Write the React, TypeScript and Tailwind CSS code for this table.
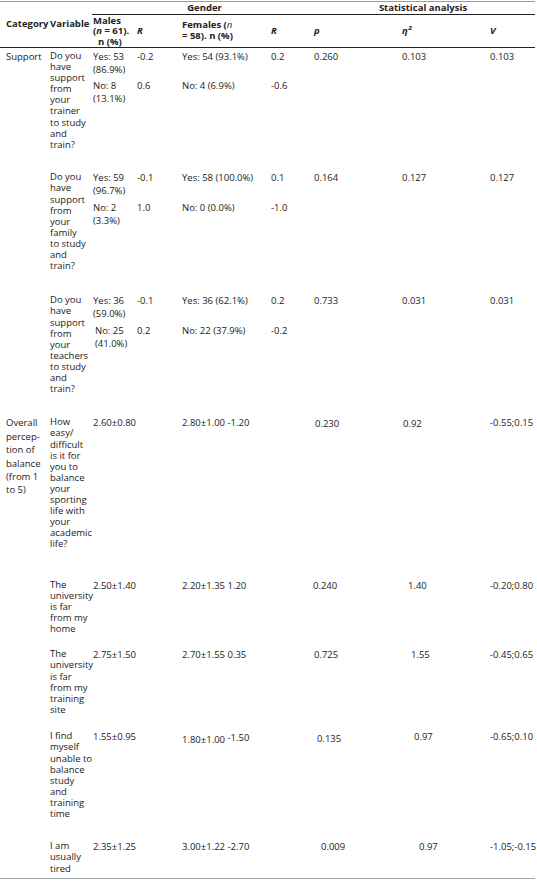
import type { ReactNode } from 'react';

const cols = 'grid grid-cols-[50px_43px_44px_45px_89px_43px_88px_88px_1fr]';

const Lines = ({ items, className = '' }: { items: string[]; className?: string }) => (
  <div className={className}>
    {items.map((t, i) => (
      <div key={i} className="whitespace-nowrap">{t}</div>
    ))}
  </div>
);

// yes / no pair, second answer always sits on the same baseline across the row
const Pair = ({ a, b, bClass = '' }: { a: ReactNode; b: ReactNode; bClass?: string }) => (
  <div className="leading-[13px]">
    <div className="h-[29.4px]">{a}</div>
    <div className={bClass}>{b}</div>
  </div>
);

const SupportRow = ({
  h,
  cat,
  variable,
  males,
  r1,
  females,
  r2,
  p,
  eta,
  v,
}: {
  h: string;
  cat?: string;
  variable: string[];
  males: [string[], string[], string?];
  r1: [string, string];
  females: [string, string];
  r2: [string, string];
  p: string;
  eta: string;
  v: string;
}) => (
  <div className={`${cols} ${h} pt-[2px]`}>
    <div className="pl-[6px] leading-[13.4px]">{cat}</div>
    <Lines items={variable} className="leading-[11.1px]" />
    <Pair a={<Lines items={males[0]} />} b={<Lines items={males[1]} />} bClass={males[2]} />
    <Pair a={r1[0]} b={r1[1]} />
    <Pair a={<span className="whitespace-nowrap">{females[0]}</span>} b={<span className="whitespace-nowrap">{females[1]}</span>} />
    <Pair a={r2[0]} b={r2[1]} />
    <div className="leading-[13px]">{p}</div>
    <div className="leading-[13px]">{eta}</div>
    <div className="leading-[13px]">{v}</div>
  </div>
);

const BalanceRow = ({
  h,
  cat,
  variable,
  males,
  females,
  p,
  pClass,
  eta,
  etaClass,
  v,
}: {
  h: string;
  cat?: string[];
  variable: string[];
  males: string;
  females: ReactNode;
  p: string;
  pClass: string;
  eta: string;
  etaClass: string;
  v: string;
}) => (
  <div className={`${cols} ${h} pt-[2px] leading-[13px]`}>
    <div className="pl-[6px] leading-[13.4px]">{cat && <Lines items={cat} />}</div>
    <Lines items={variable} className="leading-[11.1px]" />
    <div className="whitespace-nowrap">{males}</div>
    <div />
    <div className="whitespace-nowrap">{females}</div>
    <div />
    <div className={pClass}>{p}</div>
    <div className={etaClass}>{eta}</div>
    <div className="whitespace-nowrap pr-[5px] text-right">{v}</div>
  </div>
);

export default function App() {
  return (
    <div className="min-h-[887px] w-[537px] bg-white pt-[1px] font-['Open_Sans',sans-serif] text-[9.5px] text-[#222]">
      {/* head */}
      <div className="border-t border-b border-t-[#9a9a9a] border-b-[#222] w-[535px]">
        <div className={`${cols} grid-rows-[13px_32px] font-bold leading-[10.6px]`}>
          <div className="row-span-2 flex items-center pl-[6px]">Category</div>
          <div className="row-span-2 flex items-center">Variable</div>
          <div className="col-span-4 -ml-px border-b border-[#222] pl-[3px] pt-[1px] text-center">Gender</div>
          <div className="col-span-3 border-b border-[#222] pr-[3px] pt-[1px] text-center">Statistical analysis</div>
          <div className="flex flex-col justify-center pt-[1px]">
            <div>Males</div>
            <div className="whitespace-nowrap">
              (<i>n</i> = 61).
            </div>
            <div className="pl-[5px]">n (%)</div>
          </div>
          <div className="flex items-center italic">R</div>
          <div className="flex flex-col justify-center">
            <div className="whitespace-nowrap">
              Females (<i className="font-normal">n</i>
            </div>
            <div className="whitespace-nowrap">= 58). n (%)</div>
          </div>
          <div className="flex items-center italic">R</div>
          <div className="flex items-center italic">p</div>
          <div className="flex items-center italic">η²</div>
          <div className="flex items-center italic">V</div>
        </div>
      </div>

      {/* body */}
      <div className="w-[535px] border-b border-[#a5a5a5]">
        <SupportRow
          h="h-[121.4px]"
          cat="Support"
          variable={['Do you', 'have', 'support', 'from', 'your', 'trainer', 'to study', 'and', 'train?']}
          males={[['Yes: 53', '(86.9%)'], ['No: 8', '(13.1%)']]}
          r1={['-0.2', '0.6']}
          females={['Yes: 54 (93.1%)', 'No: 4 (6.9%)']}
          r2={['0.2', '-0.6']}
          p="0.260"
          eta="0.103"
          v="0.103"
        />
        <SupportRow
          h="h-[123px]"
          variable={['Do you', 'have', 'support', 'from', 'your', 'family', 'to study', 'and', 'train?']}
          males={[['Yes: 59', '(96.7%)'], ['No: 2', '(3.3%)']]}
          r1={['-0.1', '1.0']}
          females={['Yes: 58 (100.0%)', 'No: 0 (0.0%)']}
          r2={['0.1', '-1.0']}
          p="0.164"
          eta="0.127"
          v="0.127"
        />
        <SupportRow
          h="h-[122px]"
          variable={['Do you', 'have', 'support', 'from', 'your', 'teachers', 'to study', 'and', 'train?']}
          males={[['Yes: 36', '(59.0%)'], ['No: 25', '(41.0%)'], 'pl-[2px]']}
          r1={['-0.1', '0.2']}
          females={['Yes: 36 (62.1%)', 'No: 22 (37.9%)']}
          r2={['0.2', '-0.2']}
          p="0.733"
          eta="0.031"
          v="0.031"
        />
        <BalanceRow
          h="h-[162.6px]"
          cat={['Overall', 'percep-', 'tion of', 'balance', '(from 1', 'to 5)']}
          variable={['How', 'easy/', 'difficult', 'is it for', 'you to', 'balance', 'your', 'sporting', 'life with', 'your', 'academic', 'life?']}
          males="2.60±0.80"
          females="2.80±1.00 -1.20"
          p="0.230"
          pClass="pl-[1px] pt-[1px]"
          eta="0.92"
          etaClass="pl-[1px] pt-[1px]"
          v="-0.55;0.15"
        />
        <BalanceRow
          h="h-[69.4px]"
          variable={['The', 'university', 'is far', 'from my', 'home']}
          males="2.50±1.40"
          females="2.20±1.35 1.20"
          p="0.240"
          pClass="-ml-[1px]"
          eta="1.40"
          etaClass="pl-[6px]"
          v="-0.20;0.80"
        />
        <BalanceRow
          h="h-[82px]"
          variable={['The', 'university', 'is far', 'from my', 'training', 'site']}
          males="2.75±1.50"
          females="2.70±1.55 0.35"
          p="0.725"
          pClass="pl-[0px]"
          eta="1.55"
          etaClass="pl-[9px]"
          v="-0.45;0.65"
        />
        <BalanceRow
          h="h-[110px]"
          variable={['I find', 'myself', 'unable to', 'balance', 'study', 'and', 'training', 'time']}
          males="1.55±0.95"
          females={
            <span className="inline-block pt-[1px]">
              1.80±1.00 <span className="align-[2px]">-1.50</span>
            </span>
          }
          p="0.135"
          pClass="pl-[3px] pt-[2px]"
          eta="0.97"
          etaClass="pl-[12px]"
          v="-0.65;0.10"
        />
        <BalanceRow
          h="h-[39.8px]"
          variable={['I am', 'usually', 'tired']}
          males="2.35±1.25"
          females="3.00±1.22 -2.70"
          p="0.009"
          pClass="pl-[7px]"
          eta="0.97"
          etaClass="pl-[17px]"
          v="-1.05;-0.15"
        />
      </div>
    </div>
  );
}
